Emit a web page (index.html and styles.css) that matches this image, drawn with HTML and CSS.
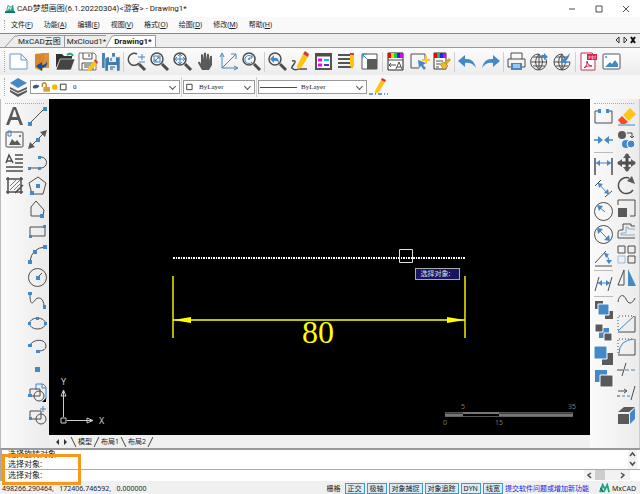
FILE: index.html
```
<!DOCTYPE html>
<html lang="zh-CN">
<head>
  <meta charset="UTF-8" />
  <title>CAD梦想画图</title>
  <link rel="stylesheet" href="styles.css">
</head>
<body>
  <header class="titlebar">
    <svg class="logo" viewBox="0 0 12 12"><path d="M1 10 3 2 6 4 9 2 10 10Z" fill="#20a38c"/><path d="M3 8 4 4 6 7 7 4" class="w"/><path d="M0 10H11" stroke="#176d66" stroke-width="2"/></svg>
    <h1>CAD梦想画图(6.1.20220304)&lt;游客&gt; - Drawing1*</h1>
    <div class="window-buttons">
      <button aria-label="最小化"><svg viewBox="0 0 8 8"><path d="M1 4H7" class="k"/></svg></button>
      <button aria-label="最大化"><svg viewBox="0 0 8 8"><path d="M1 1H7V7H1Z" class="k"/></svg></button>
      <button aria-label="关闭"><svg viewBox="0 0 8 8"><path d="M1 1 7 7M7 1 1 7" class="k"/></svg></button>
    </div>
  </header>

  <nav class="menubar grip">
    <button>文件(<u>F</u>)</button>
    <button>功能(<u>A</u>)</button>
    <button>编辑(<u>E</u>)</button>
    <button>视图(<u>V</u>)</button>
    <button>格式(<u>O</u>)</button>
    <button>绘图(<u>D</u>)</button>
    <button>修改(<u>M</u>)</button>
    <button>帮助(<u>H</u>)</button>
  </nav>

  <div class="tabs">
    <svg class="slant" viewBox="0 0 13 12"><path d="M0 12 10 1H13"/></svg>
    <button class="tab">MxCAD云图</button>
    <button class="tab">MxCloud1*</button>
    <svg class="slant last" viewBox="0 0 8 12"><path d="M0 12 6 1H8V12Z" fill="#fff" stroke="none"/><path d="M0 12 6 1H8"/></svg>
    <button class="tab active">Drawing1*</button>
    <svg class="tab-arrows" viewBox="0 0 22 8"><path d="M5 1V7L2 4ZM10 1V7L13 4Z" fill="none" stroke="#333"/><path d="M17 1 21 7M21 1 17 7" stroke="#111" stroke-width="2"/></svg>
  </div>

  <div class="toolbar grip">
    <button aria-label="新建"><svg viewBox="0 0 23 23"><path d="M3 4H14L20 10V19H3ZM14 4V10H20" stroke="#6b9bcb" fill="#fff"/></svg></button>
    <button aria-label="打开云图"><svg viewBox="0 0 23 23"><path d="M13 3H19V18H13Z" fill="#e08f3a"/><path d="M5 4 14 3V16L12 21 5 18Z" fill="#d9862c"/><path d="M17 11Q18 17 12 18V21L6 16 12 12V15Q16 15 17 11Z" fill="#12519c"/></svg></button>
    <button aria-label="打开"><svg viewBox="0 0 23 23"><path d="M3 4H9L11 6H19V10H7L3 18Z" fill="#333"/><path d="M7 9H22L18 20H3Z" fill="#444" stroke="#fff" stroke-width=".6"/><path d="M14 5Q18 2 20 6" stroke="#22a88d" stroke-width="2" fill="none"/></svg></button>
    <button aria-label="保存"><svg viewBox="0 0 23 23"><path d="M3 3H18L20 5V20H3Z" fill="#fff" stroke="#777"/><path d="M7 3V9H16V3M13 4V7M6 20V13H17V20M8 15H15M8 17H13" class="k"/><path d="M12 18 18 11 21 14 15 20 12 21Z" fill="#ffc40c"/><path d="M18 11 19 9 22 12 21 14Z" fill="#e4362e"/></svg></button>
    <button aria-label="另存为"><svg viewBox="0 0 23 23"><path d="M3 3H16V18H3Z" fill="#4d83b4"/><path d="M6 3H13V8H6Z" fill="#fff"/><path d="M8 7H21V21H6V9Z" fill="#3e7cb4" stroke="#ddd" stroke-width=".7"/><path d="M10 7H17V12H10ZM9 15H18V21H9Z" fill="#e4edf5"/><path d="M12 8V11M11 17H16M11 19H14" class="k"/></svg></button>
    <i class="sep"></i>
    <button aria-label="实时缩放"><svg viewBox="0 0 23 23"><path d="M12 4A6 6 0 1 0 14 13" class="k h"/><path d="M14 14 20 20" class="k t"/><path d="M13 7H20M17 4V10M14 12H20" class="b"/></svg></button>
    <button aria-label="窗口缩放"><svg viewBox="0 0 23 23"><circle cx="9" cy="9" r="6" class="k h"/><path d="M14 14 20 20" class="k t"/><path d="M6 6H12V12H6ZM7 11 11 7M9 7H11V9M7 9V11H9" class="b"/></svg></button>
    <button aria-label="范围缩放"><svg viewBox="0 0 23 23"><circle cx="9" cy="9" r="6" class="k h"/><path d="M14 14 20 20" class="k t"/><path d="M4 9H14M9 4V14M6 7 4 9 6 11M12 7 14 9 12 11M7 6 9 4 11 6M7 12 9 14 11 12" class="b"/></svg></button>
    <button aria-label="平移"><svg viewBox="0 0 23 23"><path d="M8 20 4 13Q4 11 6 12L7 14V5Q8 3 9 5V10L10 3Q11 2 12 3V10L13 4Q15 3 15 5V11L16 6Q18 5 18 7V15L15 20Z" class="fk"/></svg></button>
    <button aria-label="坐标"><svg viewBox="0 0 23 23"><path d="M5 5V18H20M5 18 19 4M3 7 5 3 7 7M17 16 21 18 17 20M14 4H19V9" class="b"/></svg></button>
    <button aria-label="上次视图"><svg viewBox="0 0 23 23"><circle cx="9" cy="9" r="6" class="k h"/><path d="M14 14 20 20" class="k t"/><path d="M12 7A4 4 0 1 0 12 12M12 4V8H9" class="b"/><circle cx="9" cy="9" r="1" class="fb"/></svg></button>
    <i class="sep"></i>
    <button aria-label="返回视图"><svg viewBox="0 0 23 23"><circle cx="9" cy="9" r="6" class="k h"/><path d="M14 14 20 20" class="k t"/><path d="M4 9 8 5V8Q13 7 13 13Q11 10 8 11V13Z" class="fb"/></svg></button>
    <button aria-label="画笔"><svg viewBox="0 0 23 23"><path d="M3 11Q8 10 5 14T3 18Q6 21 9 19H18" class="k h"/><path d="M8 16 14 4 19 7 12 18 8 19Z" fill="#ffc40c"/><path d="M14 4 16 1 20 4 19 7Z" fill="#d33c35"/></svg></button>
    <button aria-label="图层"><svg viewBox="0 0 23 23"><path d="M4 4H19V19H4Z" fill="#fff" stroke="#555" stroke-width="2"/><path d="M4 5H19" class="k t"/><path d="M6 10H10M6 15H10" stroke="#f0f" stroke-width="3"/><path d="M12 10H17" stroke="#18b8d9" stroke-width="2"/><path d="M12 15H17" stroke="#6326dc" stroke-width="2"/></svg></button>
    <button aria-label="线型"><svg viewBox="0 0 23 23"><path d="M3 5H15M3 9H15M3 13H15M3 17H18" stroke="#555" stroke-width="2"/><path d="M15 5H19V16L17 19 15 16Z" fill="#ffc40c"/><path d="M15 3H19V5H15Z" fill="#e3342f"/></svg></button>
    <button aria-label="缩放"><svg viewBox="0 0 23 23"><path d="M4 4H19V19H4Z" fill="#fff" stroke="#555"/><path d="M9 9H19V19H9Z" class="fk"/><path d="M4 4 9 9M5 8V4H9" class="b"/></svg></button>
    <i class="sep"></i>
    <button aria-label="文字样式"><svg viewBox="0 0 23 23"><path d="M4 3H19V20H4Z" fill="#fff" stroke="#222"/><path d="M4 3H19V8H4Z" fill="#f00"/><path d="M7 3H10V8H7Z" fill="#fc0"/><path d="M10 3H13V8H10Z" fill="#0d3"/><path d="M13 3H16V8H13Z" fill="#22f"/><path d="M16 3H19V8H16Z" fill="#d0e"/><path d="M4 10H19M5 15H12M5 15 7 13M5 15 7 17M12 19 15 12 18 19M13 17H17" class="k"/></svg></button>
    <button aria-label="快速选择"><svg viewBox="0 0 23 23"><path d="M12 18H4V4H18V9" class="k"/><path d="M11 10 19 13 16 15 19 18 17 20 14 16 12 18Z" class="fb"/><path d="M19 6V14M15 10H23" stroke="#ffc72b" stroke-width="2"/></svg></button>
    <button aria-label="格式刷"><svg viewBox="0 0 23 23"><path d="M4 3H16V19H4Z" fill="#fff" stroke="#333"/><path d="M4 3H16V8H4Z" fill="#f00"/><path d="M7 3H10V8H7Z" fill="#0c3"/><path d="M10 3H13V8H10Z" fill="#22f"/><path d="M13 3H16V8H13Z" fill="#d0e"/><path d="M6 11H13M6 14H10M6 17H9" class="k"/><path d="M10 14 14 12 18 16 14 20Z" fill="#efb928" stroke="#95701d" stroke-width=".6"/><path d="M16 13 20 9" stroke="#dca523" stroke-width="3"/></svg></button>
    <i class="sep"></i>
    <button aria-label="撤销"><svg viewBox="0 0 23 23"><path d="M2 11 9 5V9Q18 8 20 18Q16 12 9 13V17Z" class="fb"/></svg></button>
    <button aria-label="重做"><svg viewBox="0 0 23 23"><path d="M21 11 14 5V9Q5 8 3 18Q7 12 14 13V17Z" class="fb"/></svg></button>
    <i class="sep"></i>
    <button aria-label="打印"><svg viewBox="0 0 23 23"><path d="M6 9V3H17V9M6 17H3V9H20V17H17" class="k"/><path d="M6 13H17V20H6Z" class="fb"/><path d="M8 15H15M8 17H15" stroke="#fff"/></svg></button>
    <button aria-label="发布"><svg viewBox="0 0 23 23"><path d="M11 4A8 8 0 1 0 18 9M11 4Q4 12 11 20Q18 12 11 4V20M3 12H19M5 7H17M5 16H17" class="k"/><path d="M12 8Q13 4 16 5V3L20 7 16 10V8Z" class="fb"/></svg></button>
    <button aria-label="下载"><svg viewBox="0 0 23 23"><path d="M11 4A8 8 0 1 0 19 12M11 4Q4 12 11 20Q18 12 11 4V20M3 12H19M5 7H17M5 16H17" class="k"/><path d="M19 3Q18 8 15 11L17 13H10V7L12 9Q16 7 19 3Z" class="fb"/></svg></button>
    <i class="sep"></i>
    <button aria-label="导出PDF"><svg viewBox="0 0 23 23"><path d="M4 3H15L18 6V20H4Z" fill="#fff" stroke="#c83255"/><path d="M10 4H20V10H10Z" fill="#d4204a"/><path d="M12 9V6H13V8M15 9V6H16V9ZM18 9V6H19" stroke="#fff" fill="none" stroke-width=".6"/><path d="M7 18Q11 15 10 11Q11 16 15 16Q10 15 7 18" stroke="#d4204a" fill="none"/></svg></button>
    <button aria-label="导出图片"><svg viewBox="0 0 23 23"><rect x="3" y="4" width="17" height="15" rx="1" fill="#fff" stroke="#555"/><path d="M5 17 10 12 12 14 15 10 18 14V17Z" class="fb"/><circle cx="6" cy="7" r="1" class="fb"/></svg></button>
  </div>

  <div class="toolbar props grip">
    <button aria-label="图层管理"><svg viewBox="0 0 23 23"><path d="M3 14 11 18 20 14V16L11 21 3 16Z" class="fk"/><path d="M3 11 11 15 20 11V13L11 17 3 13Z" class="fk"/><path d="M3 7 11 2 20 7 11 12Z" class="fb"/></svg></button>
    <div class="combo layer">
      <svg viewBox="0 0 38 12"><path d="M2 5Q6 2 9 5 6 9 2 7Z" fill="#345c88"/><path d="M12 6V3Q14 0 16 3V6" fill="none" stroke="#b98524" stroke-width="1.5"/><path d="M13 6H20V11H13Z" fill="#d8a136"/><circle cx="25" cy="6" r="3" fill="#ffb900"/><path d="M31 3H37V9H31Z" fill="#fff" stroke="#333"/></svg>
      <select aria-label="图层"><option>0</option></select>
    </div>
    <i class="sep"></i>
    <div class="combo color">
      <svg viewBox="0 0 10 12"><path d="M3 3H9V9H3Z" fill="#fff" stroke="#333"/></svg>
      <select aria-label="颜色"><option>ByLayer</option></select>
    </div>
    <i class="sep"></i>
    <div class="combo linetype">
      <svg viewBox="0 0 38 12"><path d="M1 6.500H38" class="k"/></svg>
      <select aria-label="线型"><option>ByLayer</option></select>
    </div>
    <button aria-label="线宽"><svg viewBox="0 0 23 23"><path d="M8 15 14 4 18 6 12 16 8 18Z" fill="#ffc40c"/><path d="M14 4 15 2 19 4 18 6Z" fill="#d82c29"/><path d="M2 18H21" stroke="#477cad" stroke-width="1.5" stroke-dasharray="4 2 1 2"/></svg></button>
  </div>

  <main>
    <aside class="tools left">
      <div class="column">
        <button aria-label="文字"><svg viewBox="0 0 23 23"><path d="M3 20 10 2H13L20 20H17L15 15H8L6 20ZM9 12H14L12 5H11Z" class="fk" fill-rule="evenodd"/></svg></button>
        <button aria-label="图片"><svg viewBox="0 0 23 23"><rect x="3" y="4" width="17" height="15" rx="1" class="k"/><path d="M6 17 9 11 12 14 14 12 18 17Z" class="fk"/><circle cx="17" cy="8" r="1" class="fk"/><path d="M5 3H8V8H5Z" class="b"/></svg></button>
        <button aria-label="多行文字"><svg viewBox="0 0 23 23"><path d="M3 12 6 4 10 12M4 10H9M12 4H20M12 8H20M12 12H20M3 16H20M3 20H20" class="k h"/></svg></button>
        <button aria-label="填充"><svg viewBox="0 0 23 23"><path d="M3 5H20M5 3V20M18 3V20M3 18H20M12 19 20 11" class="k h"/><path d="M7 12 13 6M7 16 17 6M11 16 17 10" class="b"/></svg></button>
      </div>
      <div class="column">
        <button aria-label="直线"><svg viewBox="0 0 23 23"><path d="M4 18 18 4" class="k"/><path d="M2 17H6V21H2ZM17 2H21V6H17Z" class="fb"/></svg></button>
        <button aria-label="构造线"><svg viewBox="0 0 23 23"><path d="M4 19 19 4" class="k"/><path d="M2 21 4 14 9 19ZM21 2 14 4 19 9Z" class="fk"/><path d="M10 10H14V14H10Z" class="fb"/></svg></button>
        <button aria-label="多段线"><svg viewBox="0 0 23 23"><path d="M4 17H15A5 5 0 0 0 15 6H13" class="k"/><path d="M2 16H5V19H2ZM12 16H15V19H12ZM12 5H15V8H12Z" class="fb"/></svg></button>
        <button aria-label="多边形"><svg viewBox="0 0 23 23"><path d="M12 3 20 9 17 20H6L3 9Z" class="k"/><path d="M10 10H14V14H10ZM4 17H8V21H4Z" class="fb"/></svg></button>
        <button aria-label="闭合多段线"><svg viewBox="0 0 23 23"><path d="M10 4 18 13 17 19H5V10Z" class="k"/><path d="M14 17H18V21H14Z" class="fb"/></svg></button>
        <button aria-label="矩形"><svg viewBox="0 0 23 23"><path d="M4 7H19V16H4Z" class="k"/><path d="M3 15H6V18H3ZM17 5H20V8H17Z" class="fb"/></svg></button>
        <button aria-label="圆弧"><svg viewBox="0 0 23 23"><path d="M4 18Q6 5 19 4" class="k"/><path d="M2 17H6V21H2ZM7 7H11V11H7ZM17 2H21V6H17Z" class="fb"/></svg></button>
        <button aria-label="圆"><svg viewBox="0 0 23 23"><circle cx="11.5" cy="11.5" r="9" class="k"/><path d="M12 11 16 7" class="k"/><path d="M10 10H14V14H10Z" class="fb"/></svg></button>
        <button aria-label="样条曲线"><svg viewBox="0 0 23 23"><path d="M4 5C4 20 8 12 10 10S18 8 18 18" class="k"/><path d="M2 3H6V6H2ZM17 16H20V20H17Z" class="fb"/></svg></button>
        <button aria-label="椭圆"><svg viewBox="0 0 23 23"><ellipse cx="11.5" cy="11.5" rx="8" ry="5.5" class="k"/><path d="M2 10H5V13H2ZM18 10H21V13H18ZM10 5H13V8H10Z" class="fb"/></svg></button>
        <button aria-label="椭圆弧"><svg viewBox="0 0 23 23"><path d="M4 10C7 4 20 3 20 11Q20 16 12 16" class="k"/><path d="M2 9H6V12H2ZM10 15H14V18H10Z" class="fb"/></svg></button>
        <button aria-label="点"><svg viewBox="0 0 23 23"><path d="M9 9H14V14H9Z" class="fb"/></svg></button>
        <button aria-label="插入块"><svg viewBox="0 0 23 23"><path d="M10 9V3H17L20 6V18M16 3V7H20" class="b"/><path d="M4 8H14V15H4Z" class="k"/><circle cx="13" cy="15" r="5" class="k"/><path d="M2 13H6V16H2Z" class="fb"/><path d="M20 17V21H16Z"/></svg></button>
        <button aria-label="创建块"><svg viewBox="0 0 23 23"><path d="M4 7H15V15H4Z" class="k"/><circle cx="15" cy="15" r="5" class="k"/><path d="M3 13H6V16H3Z" class="fb"/><path d="M14 5H20M17 2V8" class="b"/></svg></button>
      </div>
    </aside>

    <section class="workspace">
      <div class="canvas">
        <svg class="dimension" viewBox="0 0 294 100">
          <path d="M1 9H293" stroke="#fff" stroke-width="2" stroke-dasharray="2 1 1 1"/>
          <path d="M1 27V89M293 27V89M1 71H293" stroke="#ff0" stroke-width="1.4"/>
          <path d="M1 71 19 68V74ZM293 71 275 68V74Z" fill="#ff0"/>
          <path d="M227.5 .5H240.5V13.5H227.5Z" fill="none" stroke="#ddd"/>
          <text x="146" y="94" text-anchor="middle">80</text>
        </svg>
        <div class="hint">选择对象:</div>
        <svg class="axes" viewBox="0 0 48 54">
          <path d="M4.5 44V18M8 47.5H34M2 45H7V50H2ZM4.5 17 2 23H7ZM34 47.5 28 45V50Z" fill="none" stroke="#ccc"/>
          <text x="2" y="12">Y</text><text x="40" y="51">X</text>
        </svg>
        <svg class="scale" viewBox="0 0 136 24">
          <path d="M4.5 9.500H131.500V13.500H4.500Z" fill="none" stroke="#555"/>
          <path d="M4 12H22M58 12H132" stroke="#777" stroke-width="3"/>
          <path d="M22 10H58" stroke="#777" stroke-width="2"/>
          <text x="22" y="6">5</text><text x="131" y="6">35</text><text x="4" y="22">0</text><text x="58" y="22">15</text>
        </svg>
      </div>
      <div class="layouts">
        <svg viewBox="0 0 18 10"><path d="M8 2V8L5 5Z M13 2V8L16 5Z" fill="#333"/></svg>
        <i class="edge back"></i><button>模型</button><i class="edge"></i><button>布局1</button><i class="edge back"></i><button>布局2</button><i class="edge"></i>
      </div>
    </section>

    <aside class="tools right">
      <div class="column">
        <button aria-label="打断于点"><svg viewBox="0 0 23 23"><path d="M8 6H3V18H20V6H15" class="k"/><path d="M6 4H9V8H6ZM14 4H17V8H14Z" class="fb"/></svg></button>
        <button aria-label="合并"><svg viewBox="0 0 23 23"><path d="M2 12H9M14 12H21" class="b h"/><path d="M6 8 11 12 6 16ZM17 8 12 12 17 16Z" class="fb"/></svg></button>
        <i class="rule"></i>
        <button aria-label="线性标注"><svg viewBox="0 0 23 23"><path d="M3 4V21M20 4V21" class="k h"/><path d="M4 9H19" class="b"/><path d="M4 9 8 6V12ZM19 9 15 6V12Z" class="fb"/></svg></button>
        <button aria-label="对齐标注"><svg viewBox="0 0 23 23"><path d="M3 9 9 3M13 20 20 14" class="k"/><path d="M6 6 16 17" class="b"/><path d="M6 6 11 7 7 11ZM17 17 12 16 16 12Z" class="fb"/></svg></button>
        <button aria-label="半径标注"><svg viewBox="0 0 23 23"><circle cx="11.5" cy="11.5" r="9" class="k"/><path d="M6 6 13 12" class="b"/><path d="M5 5 11 6 7 11Z" class="fb"/></svg></button>
        <button aria-label="直径标注"><svg viewBox="0 0 23 23"><circle cx="11.5" cy="11.5" r="9" class="k"/><path d="M6 6 17 17" class="b"/><path d="M5 5 11 6 6 11ZM18 18 12 17 17 12Z" class="fb"/></svg></button>
        <button aria-label="角度标注"><svg viewBox="0 0 23 23"><path d="M3 17 14 5M3 20H20" class="k"/><path d="M13 7Q17 11 17 17" class="b"/><path d="M12 7 17 8 14 12ZM17 18 14 14H20Z" class="fb"/></svg></button>
        <i class="rule"></i>
        <button aria-label="倾斜标注"><svg viewBox="0 0 23 23"><path d="M3 19 7 5M16 19 20 5" class="k"/><path d="M6 11H18" class="b"/><path d="M6 11 10 8V14ZM18 11 14 8V14Z" class="fb"/></svg></button>
        <i class="rule"></i>
        <button aria-label="置于中间"><svg viewBox="0 0 23 23"><path d="M3 3H11V11H3ZM13 13H21V21H13Z" class="fk"/><path d="M6 6H17V17H6Z" class="fb" stroke="#fff"/></svg></button>
        <button aria-label="置于对象之后"><svg viewBox="0 0 23 23"><path d="M7 7H17V17H7Z" class="fb"/><path d="M3 3H11V11H3ZM12 12H20V20H12Z" class="fk" stroke="#fff"/></svg></button>
        <button aria-label="前置"><svg viewBox="0 0 23 23"><path d="M10 9H21V21H10Z" class="fk"/><path d="M2 2H15V15H2Z" class="fb" stroke="#fff"/></svg></button>
        <button aria-label="后置"><svg viewBox="0 0 23 23"><path d="M3 3H15V15H3Z" class="fb"/><path d="M8 8H21V20H8Z" class="fk" stroke="#fff"/></svg></button>
      </div>
      <div class="column">
        <button aria-label="删除"><svg viewBox="0 0 23 23"><path d="M8 10 15 3 21 9 14 16Z" fill="#ffc516"/><path d="M7 11 13 17 10 19H6L3 15Z" fill="#fa4b24"/><path d="M3 20H20" class="b"/></svg></button>
        <button aria-label="复制"><svg viewBox="0 0 23 23"><circle cx="7" cy="7" r="4" class="fk"/><path d="M12 5H17V10M15 8 17 10 19 8" class="k"/><circle cx="11" cy="16" r="4" class="fb"/><circle cx="16" cy="16" r="4" class="fb" stroke="#fff"/></svg></button>
        <button aria-label="移动"><svg viewBox="0 0 23 23"><path d="M12 3V20M3 12H20" class="k t"/><path d="M12 2 16 7H8ZM12 21 16 16H8ZM2 12 7 8V16ZM21 12 16 8V16Z" class="fk"/></svg></button>
        <button aria-label="旋转"><svg viewBox="0 0 23 23"><path d="M14 4A8 8 0 1 0 18 16" class="k h"/><path d="M12 7 17 2 20 10Z" class="fk"/></svg></button>
        <button aria-label="缩放对象"><svg viewBox="0 0 23 23"><path d="M3 8V3H20V19H15" class="k"/><path d="M3 11H12V20H3Z" class="fk"/></svg></button>
        <button aria-label="偏移"><svg viewBox="0 0 23 23"><path d="M20 6H16V4H8V10H5Q3 10 3 13V18H20" class="k"/><path d="M20 9H13V7H11V13H6V15H20" stroke="#8bacc8" fill="none"/></svg></button>
        <button aria-label="阵列"><svg viewBox="0 0 23 23"><path d="M3 3H10V10H3ZM13 3H20V10H13ZM13 13H20V20H13Z" class="k"/><path d="M3 13H10V20H3Z" stroke="#9cbfdd" fill="none"/></svg></button>
        <button aria-label="镜像"><svg viewBox="0 0 23 23"><path d="M9 4V19H3Z" class="k"/><path d="M13 3V20H21Z" class="fb"/></svg></button>
        <button aria-label="曲线"><svg viewBox="0 0 23 23"><path d="M3 13C4 5 9 5 11 10S17 16 20 9" class="k"/></svg></button>
        <button aria-label="倒角"><svg viewBox="0 0 23 23"><path d="M3 20H20V4" class="k"/><path d="M3 18V4H19" class="k" stroke-dasharray="1 2"/><path d="M3 19 19 4" class="b"/></svg></button>
        <button aria-label="圆角"><svg viewBox="0 0 23 23"><path d="M3 20H20V4" class="k"/><path d="M3 18V4H19" class="k" stroke-dasharray="1 2"/><path d="M4 19Q4 5 19 4" class="b"/></svg></button>
        <button aria-label="修剪"><svg viewBox="0 0 23 23"><path d="M2 12H8M7 18 11 5" class="k"/><path d="M10 12H20" class="b" stroke-dasharray="4 2"/></svg></button>
        <button aria-label="延伸"><svg viewBox="0 0 23 23"><path d="M3 10H11M9 8 12 10 9 12M2 15H5M16 19 20 5" class="k"/><path d="M7 15H16" class="b" stroke-dasharray="3 2"/></svg></button>
        <button aria-label="分解"><svg viewBox="0 0 23 23"><path d="M3 10H14V20H3ZM3 8 9 3H20L14 8Z" class="fk"/><path d="M15 9 20 4V15L15 20Z" class="fb"/></svg></button>
      </div>
    </aside>
  </main>

  <section class="command">
    <div class="history">
      <div class="lines"><p>选择旋转对象</p><p>选择对象:</p></div>
      <svg class="vscroll" viewBox="0 0 9 19"><path d="M2 6 4.500 3 7 6M2 12 4.500 15 7 12" class="k h"/></svg>
    </div>
    <div class="entry">
      <input type="text" value="选择对象:" aria-label="命令">
      <svg class="hscroll" viewBox="0 0 46 10"><path d="M11 0H21V10H11Z" fill="#cdcdcd"/><path d="M7 3 4 5 7 8M37 3 40 5 37 8" class="k h"/></svg>
    </div>
    <div class="highlight"></div>
  </section>

  <footer class="statusbar">
    <span class="coords">498266.290464,&nbsp;&nbsp; 172406.746592,&nbsp;&nbsp; 0.000000</span>
    <button>栅格</button>
    <button class="on">正交</button>
    <button class="on">极轴</button>
    <button class="on">对象捕捉</button>
    <button class="on">对象追踪</button>
    <button class="on">DYN</button>
    <button class="on">线宽</button>
    <a href="#">提交软件问题或增加新功能</a>
    <svg class="logo" viewBox="0 0 12 12"><path d="M1 10 4 2 6 6M5 10 9 2 11 10" fill="none" stroke="#22a783" stroke-width="2"/><path d="M2 5 4 10" stroke="#15766b" stroke-width="2"/></svg>
    <span class="brand">MxCAD</span>
  </footer>
</body>
</html>
```
FILE: styles.css
```
* {
  box-sizing: border-box;
}
body {
  margin: 0;
  height: 100vh;
  display: flex;
  flex-direction: column;
  overflow: hidden;
  background: #f5f5f5;
  color: #222;
  font-family: "Noto Sans", "Noto Sans CJK SC", sans-serif;
  font-size: 7px;
  line-height: 10px;
}
button, select, input {
  font: inherit;
  color: inherit;
  border: none;
  background: none;
  padding: 0;
  margin: 0;
}
button {
  flex: none;
  white-space: nowrap;
}
svg {
  display: block;
  flex: none;
}
.k { fill: none; stroke: #4d4d4d; }
.b { fill: none; stroke: #4286c2; }
.w { fill: none; stroke: #fff; }
.t { stroke-width: 3; }
.h { stroke-width: 1.5; }
.fk { fill: #5a5a5a; }
.fb { fill: #4389c8; }

.titlebar {
  display: flex;
  align-items: center;
  height: 17px;
  padding-left: 5px;
  background: #fff;
}
.logo {
  width: 11px;
  height: 11px;
}
h1 {
  flex: 1;
  margin: 0 0 0 1px;
  font-family: Roboto, "Noto Sans CJK SC", sans-serif;
  font-size: 8px;
  font-weight: normal;
}
.window-buttons {
  display: flex;
  gap: 19px;
  padding-right: 10px;
}
.window-buttons svg {
  width: 8px;
  height: 8px;
}
.grip {
  position: relative;
}
.grip::before {
  content: "";
  position: absolute;
  left: 4px;
  top: 3px;
  bottom: 3px;
  border-left: 1px dotted #aaa;
}
.menubar {
  display: flex;
  align-items: center;
  gap: 11px;
  height: 16px;
  padding-left: 11px;
  background: #f9f9f9;
}
.tabs {
  display: flex;
  align-items: flex-end;
  height: 15px;
  padding-left: 5px;
  border-top: 1px solid #888;
  border-bottom: 1px solid #999;
  background: #ededed;
  font-family: Roboto, "Noto Sans CJK SC", sans-serif;
  font-size: 8px;
}
.tab {
  height: 12px;
  padding: 0 3px 0 0;
  border-top: 1px solid #999;
  border-right: 1px solid #999;
}
.tab:nth-of-type(2) {
  padding: 0 0 0 2px;
  border-right: none;
}
.tab.active {
  background: #fff;
  font-weight: bold;
}
.slant {
  width: 13px;
  height: 12px;
  fill: none;
  stroke: #999;
}
.slant.last {
  width: 8px;
}
.tab-arrows {
  width: 22px;
  height: 8px;
  margin: 0 4px 3px auto;
}

.toolbar {
  display: flex;
  align-items: center;
  height: 27px;
  padding-left: 7px;
  background: linear-gradient(#fcfcfc, #ececec);
}
.toolbar button svg, .tools button svg {
  width: 23px;
  height: 23px;
}
.sep {
  flex: none;
  width: 1px;
  height: 20px;
  margin: 0 1px;
  background: #d0d0d0;
}
.props {
  height: 24px;
  background: #f8f8f8;
}
.combo {
  display: flex;
  align-items: center;
  height: 14px;
  border: 1px solid #999;
  background: #fff;
  font-family: "Liberation Serif", "Noto Sans CJK SC", serif;
}
.combo svg {
  height: 12px;
}
.combo select {
  flex: 1;
  min-width: 0;
  height: 12px;
  padding-left: 6px;
  appearance: none;
}
.combo::after {
  content: "";
  width: 4px;
  height: 4px;
  margin: 0 4px 2px;
  border: solid #555;
  border-width: 0 1px 1px 0;
  transform: rotate(45deg);
}
.layer { width: 150px; }
.layer svg { width: 36px; }
.color { width: 72px; }
.color svg { width: 9px; }
.linetype { width: 109px; }
.linetype svg { width: 38px; }
.linetype select { padding-left: 4px; }

main {
  flex: 1;
  display: flex;
  min-height: 0;
  border-left: 1px solid #bbb;
  border-right: 1px solid #ccc;
}
.tools {
  display: flex;
  flex: none;
  padding-top: 6px;
  background: linear-gradient(90deg, #fbfbfb, #ebebeb);
  position: relative;
}
.tools::before {
  content: "";
  position: absolute;
  top: 4px;
  left: 4px;
  right: 5px;
  border-top: 1px dotted #aaa;
}
.left {
  width: 48px;
  padding-left: 2px;
}
.right {
  width: 49px;
  padding-left: 2px;
}
.column {
  width: 23px;
  display: flex;
  flex-direction: column;
}
.rule {
  height: 1px;
  margin: 1px 2px;
  background: #bbb;
}
.workspace {
  flex: 1;
  display: flex;
  flex-direction: column;
}
.canvas {
  flex: 1;
  position: relative;
  background: #000;
}
.dimension {
  position: absolute;
  left: calc(50% - 148px);
  top: calc(50% - 18px);
  width: 294px;
  height: 100px;
}
.dimension text {
  fill: #ff0;
  font-family: "Liberation Serif", serif;
  font-size: 32px;
}
.hint {
  position: absolute;
  left: calc(50% + 95px);
  top: 50%;
  width: 45px;
  margin-top: 1px;
  padding-left: 5px;
  border: 1px solid #aaa;
  background: #171760;
  color: #ddd;
}
.axes {
  position: absolute;
  left: 10px;
  bottom: 8px;
  width: 48px;
  height: 54px;
}
.axes text {
  fill: #ccc;
  font-size: 9px;
}
.scale {
  position: absolute;
  right: 13px;
  bottom: 8px;
  width: 136px;
  height: 24px;
  overflow: visible;
}
.scale text {
  fill: #777;
  font-size: 7px;
  text-anchor: middle;
}
.layouts {
  display: flex;
  align-items: center;
  height: 13px;
  padding-left: 2px;
  background: #f0f0f0;
}
.layouts svg {
  width: 18px;
  height: 10px;
}
.edge {
  width: 1px;
  height: 10px;
  margin: 0 4px;
  background: #444;
  transform: skewX(-26deg);
}
.edge.back {
  transform: skewX(26deg);
}

.command {
  position: relative;
  flex: none;
  border-top: 2px solid #999;
  border-left: 2px solid #aaa;
  background: #fff;
  font-size: 8px;
}
.history {
  display: flex;
  height: 20px;
  border-bottom: 1px solid #aaa;
}
.lines {
  flex: 1;
  display: flex;
  flex-direction: column;
  justify-content: flex-end;
  overflow: hidden;
  padding-left: 6px;
}
.lines p {
  margin: 0;
}
.vscroll {
  width: 9px;
  height: 19px;
  margin-right: 3px;
  background: #f2f2f2;
}
.entry {
  display: flex;
  height: 11px;
}
.entry input {
  flex: 1;
  min-width: 0;
  height: 9px;
  padding-left: 6px;
  outline: none;
}
.hscroll {
  width: 46px;
  height: 10px;
  margin-right: 10px;
  background: #f2f2f2;
}
.highlight {
  position: absolute;
  left: 0;
  top: 4px;
  width: 79px;
  height: 31px;
  border: 3px solid #f7981d;
}
.statusbar {
  display: flex;
  align-items: center;
  gap: 2px;
  height: 13px;
  flex: none;
  padding: 2px 4px 0 2px;
  background: #f0f0f0;
}
.coords {
  flex: 1;
}
.statusbar button {
  height: 11px;
  padding: 0 2px;
}
.statusbar button.on {
  border: 1px solid #3d9ad1;
  background: #d9ebf7;
  line-height: 9px;
}
.statusbar a {
  margin: 0 8px 0 0;
  color: #2222dd;
  text-decoration: none;
}
```
